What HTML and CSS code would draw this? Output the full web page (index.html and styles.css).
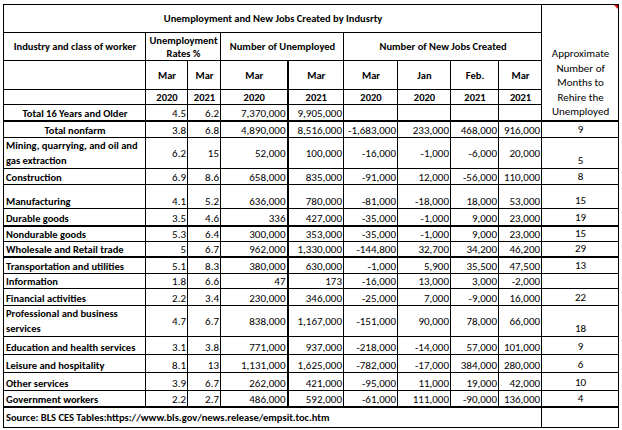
FILE: index.html
```html
<!DOCTYPE html>
<html>
<head>
<meta charset="utf-8">
<link rel="stylesheet" href="styles.css">
</head>
<body>
<table class="sheet">
  <colgroup>
    <col class="c1"><col class="c2"><col class="c3"><col class="c4"><col class="c5">
    <col class="c6"><col class="c7"><col class="c8"><col class="c9"><col class="c10">
  </colgroup>
  <tr class="h28">
    <td colspan="9" class="hd ctr mid">Unemployment and New Jobs Created by Indusrty</td>
    <td rowspan="5" class="approx ctr thickb"><span class="flag"></span>Approximate<br>Number of<br>Months to<br>Rehire the<br>Unemployed</td>
  </tr>
  <tr class="h28">
    <td class="hd ctr mid">Industry and class of worker</td>
    <td colspan="2" class="hd ctr mid">Unemployment<br>Rates %</td>
    <td colspan="2" class="hd ctr mid">Number of Unemployed</td>
    <td colspan="4" class="hd ctr mid">Number of New Jobs Created</td>
  </tr>
  <tr class="h29">
    <td></td>
    <td class="hd ctr mid">Mar</td><td class="hd ctr mid">Mar</td><td class="hd ctr mid">Mar</td>
    <td class="hd ctr mid tl">Mar</td><td class="hd ctr mid">Mar</td><td class="hd ctr mid">Jan</td>
    <td class="hd ctr mid">Feb.</td><td class="hd ctr mid">Mar</td>
  </tr>
  <tr class="h15">
    <td></td>
    <td class="hd ctr">2020</td><td class="hd ctr">2021</td><td class="hd ctr">2020</td>
    <td class="hd ctr tl">2021</td><td class="hd ctr">2020</td><td class="hd ctr">2020</td>
    <td class="hd ctr">2021</td><td class="hd ctr">2021</td>
  </tr>
  <tr class="h16 thick">
    <td class="lbl ctr">Total 16 Years and Older</td>
    <td class="num">4.5</td><td class="num">6.2</td><td class="num">7,370,000</td><td class="num tl">9,905,000</td>
    <td class="num"></td><td class="num"></td><td class="num"></td><td class="num"></td>
  </tr>
  <tr class="h17">
    <td class="lbl ctr">Total nonfarm</td>
    <td class="num">3.8</td><td class="num">6.8</td><td class="num">4,890,000</td><td class="num tl">8,516,000</td>
    <td class="num">-1,683,000</td><td class="num">233,000</td><td class="num">468,000</td><td class="num">916,000</td>
    <td class="mo">9</td>
  </tr>
  <tr class="h30 midnums">
    <td class="lbl wrap">Mining, quarrying, and oil and gas extraction</td>
    <td class="num">6.2</td><td class="num">15</td><td class="num">52,000</td><td class="num tl">100,000</td>
    <td class="num">-16,000</td><td class="num">-1,000</td><td class="num">-6,000</td><td class="num">20,000</td>
    <td class="mo">5</td>
  </tr>
  <tr class="h16">
    <td class="lbl">Construction</td>
    <td class="num">6.9</td><td class="num">8.6</td><td class="num">658,000</td><td class="num tl">835,000</td>
    <td class="num">-91,000</td><td class="num">12,000</td><td class="num">-56,000</td><td class="num">110,000</td>
    <td class="mo">8</td>
  </tr>
  <tr class="h24">
    <td class="lbl">Manufacturing</td>
    <td class="num">4.1</td><td class="num">5.2</td><td class="num">636,000</td><td class="num tl">780,000</td>
    <td class="num">-81,000</td><td class="num">-18,000</td><td class="num">18,000</td><td class="num">53,000</td>
    <td class="mo">15</td>
  </tr>
  <tr class="h17 thick">
    <td class="lbl">Durable goods</td>
    <td class="num">3.5</td><td class="num">4.6</td><td class="num">336</td><td class="num tl">427,000</td>
    <td class="num">-35,000</td><td class="num">-1,000</td><td class="num">9,000</td><td class="num">23,000</td>
    <td class="mo">19</td>
  </tr>
  <tr class="h14">
    <td class="lbl">Nondurable goods</td>
    <td class="num">5.3</td><td class="num">6.4</td><td class="num">300,000</td><td class="num tl">353,000</td>
    <td class="num">-35,000</td><td class="num">-1,000</td><td class="num">9,000</td><td class="num">23,000</td>
    <td class="mo">15</td>
  </tr>
  <tr class="h15 thick">
    <td class="lbl">Wholesale and Retail trade</td>
    <td class="num">5</td><td class="num">6.7</td><td class="num">962,000</td><td class="num tl">1,330,000</td>
    <td class="num">-144,800</td><td class="num">32,700</td><td class="num">34,200</td><td class="num">46,200</td>
    <td class="mo">29</td>
  </tr>
  <tr class="h17">
    <td class="lbl">Transportation and utilities</td>
    <td class="num">5.1</td><td class="num">8.3</td><td class="num">380,000</td><td class="num tl">630,000</td>
    <td class="num">-1,000</td><td class="num">5,900</td><td class="num">35,500</td><td class="num">47,500</td>
    <td class="mo">13</td>
  </tr>
  <tr class="h15">
    <td class="lbl">Information</td>
    <td class="num">1.8</td><td class="num">6.6</td><td class="num">47</td><td class="num tl">173</td>
    <td class="num">-16,000</td><td class="num">13,000</td><td class="num">3,000</td><td class="num">-2,000</td>
    <td class="mo"></td>
  </tr>
  <tr class="h17">
    <td class="lbl">Financial activities</td>
    <td class="num">2.2</td><td class="num">3.4</td><td class="num">230,000</td><td class="num tl">346,000</td>
    <td class="num">-25,000</td><td class="num">7,000</td><td class="num">-9,000</td><td class="num">16,000</td>
    <td class="mo">22</td>
  </tr>
  <tr class="h30 midnums">
    <td class="lbl wrap">Professional and business services</td>
    <td class="num">4.7</td><td class="num">6.7</td><td class="num">838,000</td><td class="num tl">1,167,000</td>
    <td class="num">-151,000</td><td class="num">90,000</td><td class="num">78,000</td><td class="num">66,000</td>
    <td class="mo">18</td>
  </tr>
  <tr class="h18">
    <td class="lbl">Education and health services</td>
    <td class="num">3.1</td><td class="num">3.8</td><td class="num">771,000</td><td class="num tl">937,000</td>
    <td class="num">-218,000</td><td class="num">-14,000</td><td class="num">57,000</td><td class="num">101,000</td>
    <td class="mo">9</td>
  </tr>
  <tr class="h18">
    <td class="lbl">Leisure and hospitality</td>
    <td class="num">8.1</td><td class="num">13</td><td class="num">1,131,000</td><td class="num tl">1,625,000</td>
    <td class="num">-782,000</td><td class="num">-17,000</td><td class="num">384,000</td><td class="num">280,000</td>
    <td class="mo">6</td>
  </tr>
  <tr class="h18">
    <td class="lbl">Other services</td>
    <td class="num">3.9</td><td class="num">6.7</td><td class="num">262,000</td><td class="num tl">421,000</td>
    <td class="num">-95,000</td><td class="num">11,000</td><td class="num">19,000</td><td class="num">42,000</td>
    <td class="mo">10</td>
  </tr>
  <tr class="h16 thick">
    <td class="lbl">Government workers</td>
    <td class="num">2.2</td><td class="num">2.7</td><td class="num">486,000</td><td class="num tl">592,000</td>
    <td class="num">-61,000</td><td class="num">111,000</td><td class="num">-90,000</td><td class="num">136,000</td>
    <td class="mo">4</td>
  </tr>
  <tr class="h21">
    <td colspan="9" class="lbl mid">Source: BLS CES Tables:https://www.bls.gov/news.release/empsit.toc.htm</td>
    <td></td>
  </tr>
</table>
</body>
</html>
```

FILE: styles.css
```css
html, body {
  margin: 0;
  background: #ffffff;
}
body {
  padding: 4px 0 0 3px;
  font-family: Carlito, Calibri, Lato, sans-serif;
  font-size: 11px;
  color: #000000;
}
.sheet {
  border-collapse: collapse;
  table-layout: fixed;
  width: 615px;
}
.c1 { width: 142px; }
.c2 { width: 42px; }
.c3 { width: 33px; }
.c4 { width: 67px; }
.c5 { width: 56px; }
.c6 { width: 54px; }
.c7 { width: 53px; }
.c8 { width: 48px; }
.c9 { width: 43px; }
.c10 { width: 77px; }

.sheet td {
  border: 1px solid #000000;
  padding: 0 1px 0 2px;
  line-height: 13px;
  vertical-align: bottom;
  white-space: nowrap;
  overflow: hidden;
}
.h14 { height: 14px; }
.h15 { height: 15px; }
.h16 { height: 16px; }
.h17 { height: 17px; }
.h18 { height: 18px; }
.h21 { height: 21px; }
.h24 { height: 24px; }
.h28 { height: 28px; }
.h29 { height: 29px; }
.h30 { height: 30px; }

.hd { font-weight: bold; font-size: 10.5px; }
.lbl { font-weight: bold; font-size: 10.5px; }
.ctr { text-align: center; }
.mid { vertical-align: middle !important; }
.wrap { white-space: normal !important; line-height: 15px !important; }
.num { text-align: right; padding-right: 1px !important; }
.midnums .num { vertical-align: middle; }
.sheet td.tl { border-left: 2px solid #000000; }
.thick td { border-bottom: 2px solid #000000; }
.sheet td.thickb { border-bottom: 2px solid #000000; }
.mo {
  text-align: center;
  padding-bottom: 1px !important;
}
.approx {
  position: relative;
  line-height: 14.5px !important;
  white-space: normal !important;
  padding-bottom: 0 !important;
}
.flag {
  position: absolute;
  top: 0;
  right: 0;
  width: 0;
  height: 0;
  border-top: 4px solid #e00000;
  border-left: 4px solid transparent;
}
```
